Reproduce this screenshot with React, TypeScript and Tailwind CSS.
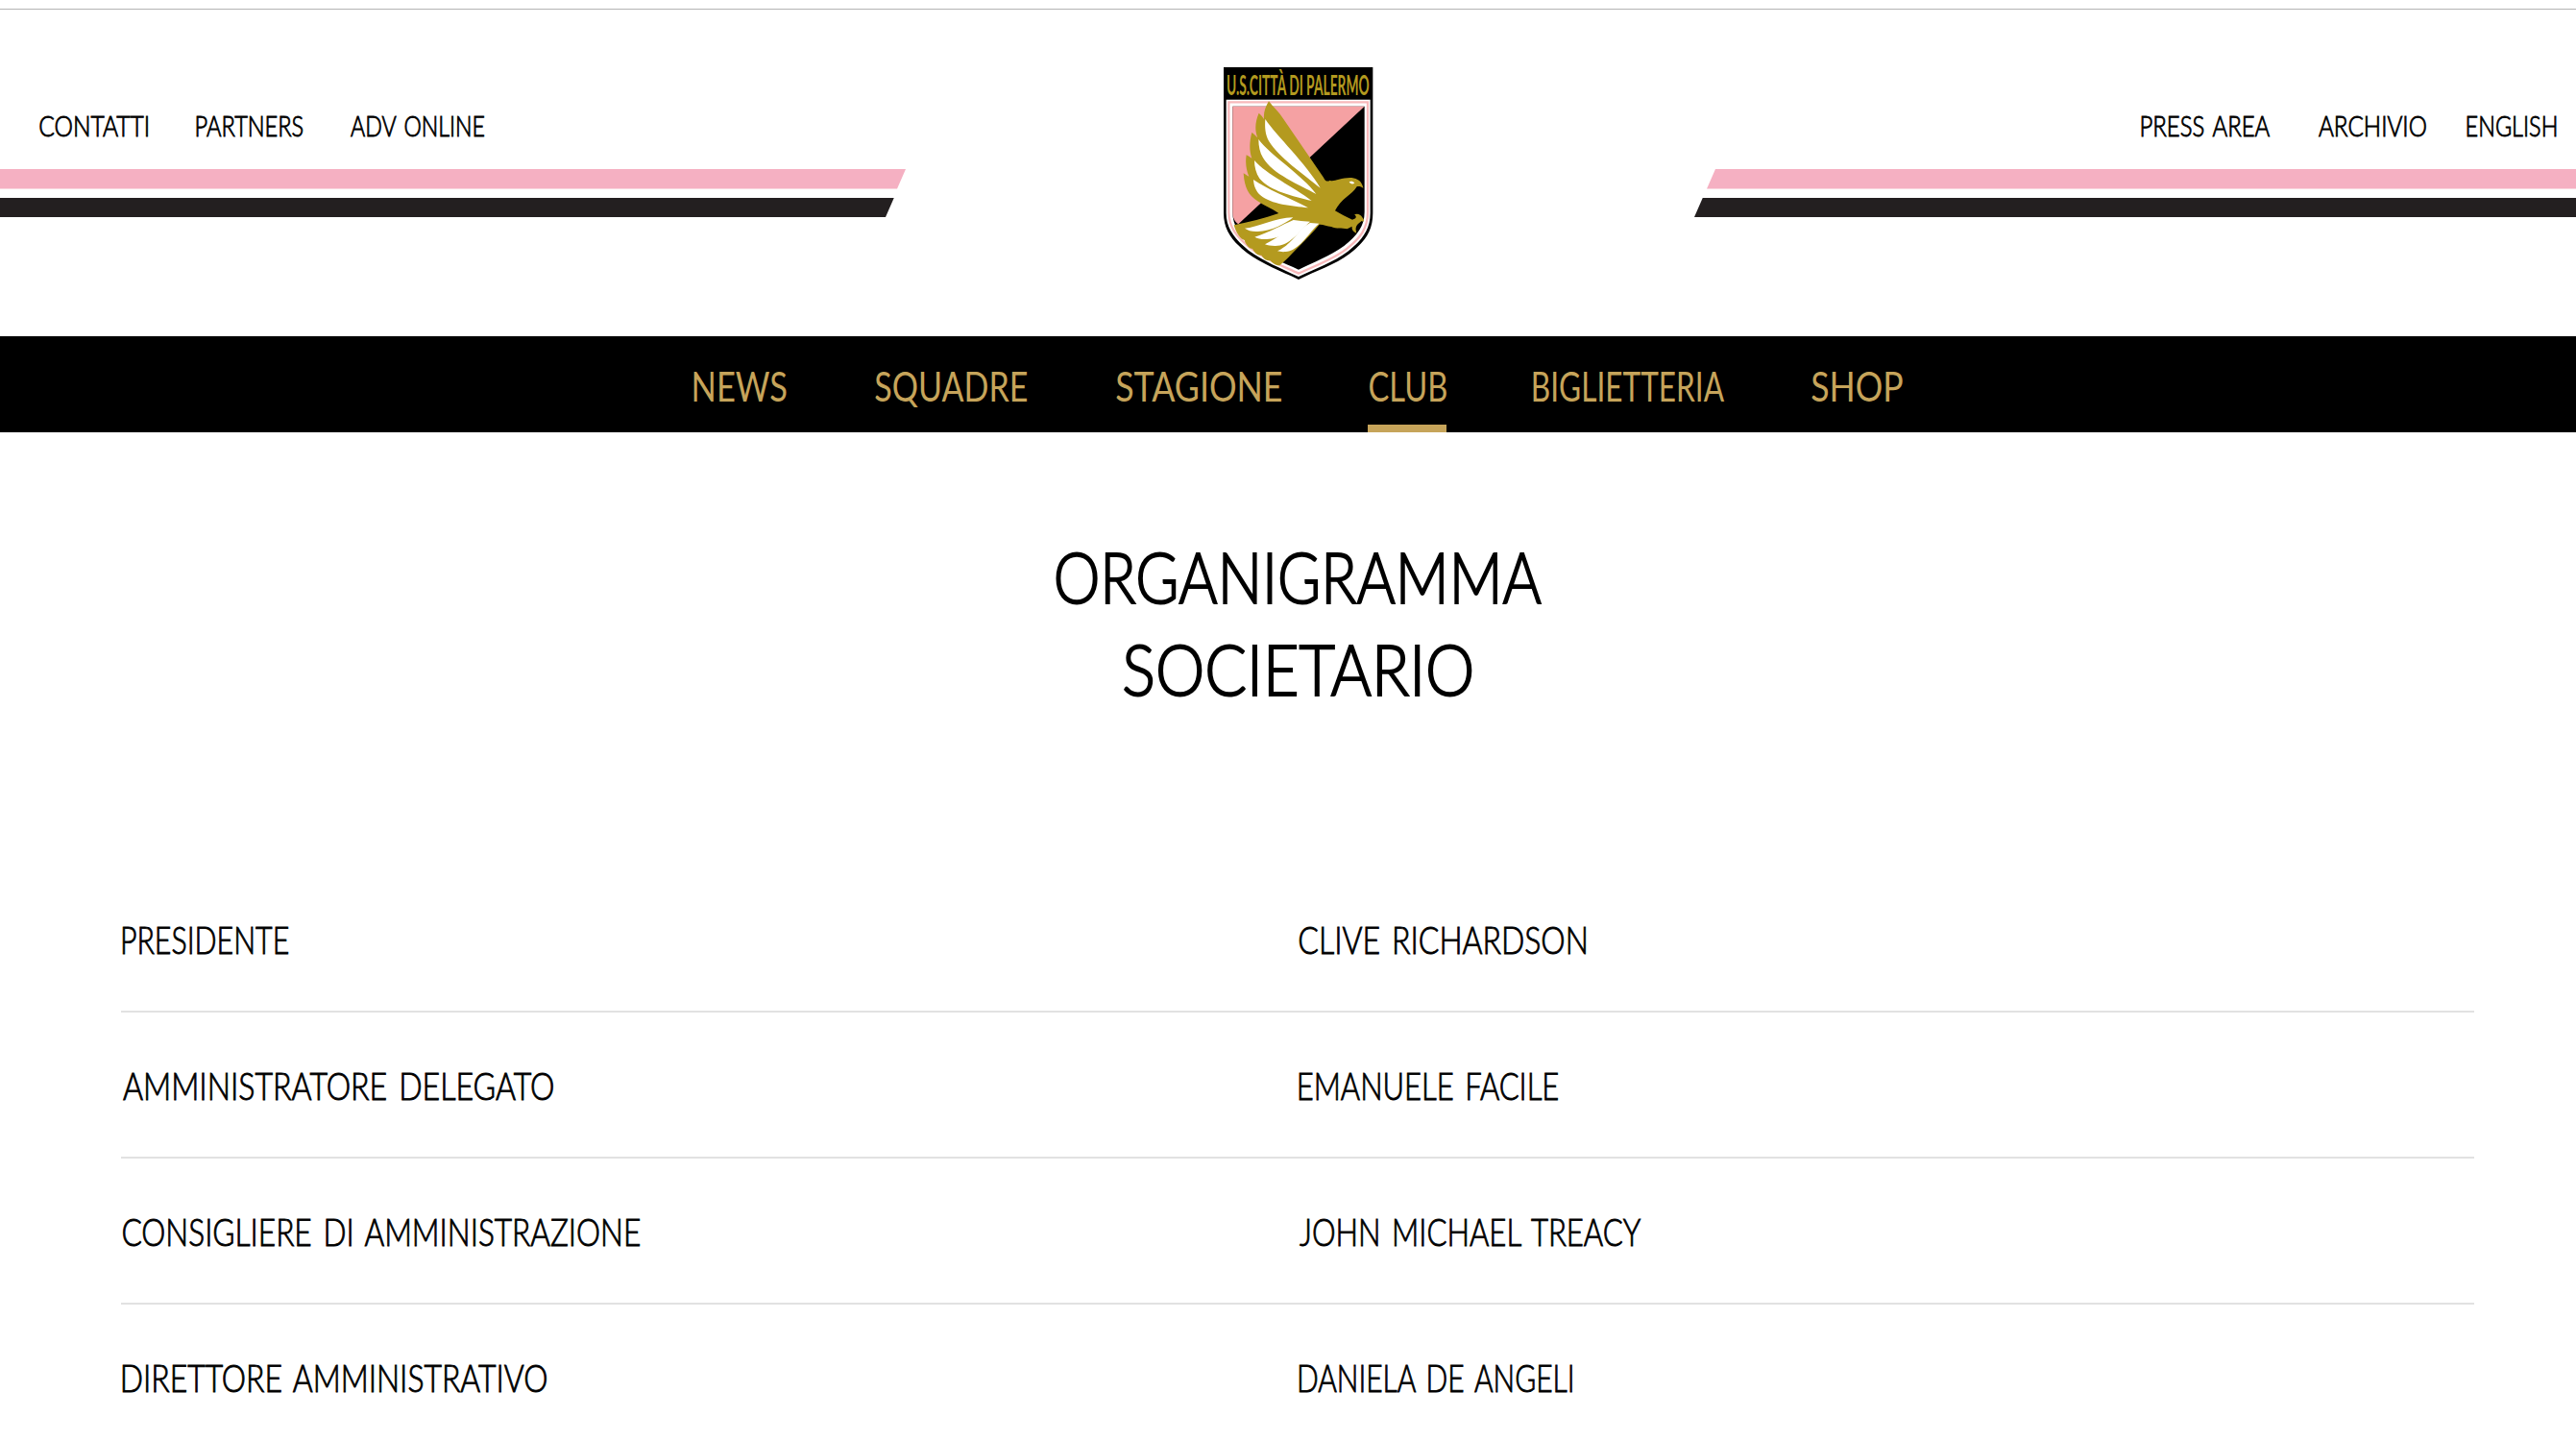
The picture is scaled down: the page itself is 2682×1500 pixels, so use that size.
import { useLayoutEffect, useRef } from "react";

type LabelProps = { text: string; width: number; className?: string };

// Condensed label: narrows the glyphs so the drawn letters span exactly `width` pixels.
function Label({ text, width, className = "" }: LabelProps) {
  const ref = useRef<HTMLSpanElement>(null);
  useLayoutEffect(() => {
    const el = ref.current;
    const ctx = document.createElement("canvas").getContext("2d");
    if (!el || !ctx) return;
    const cs = getComputedStyle(el);
    ctx.font = `${cs.fontWeight} ${cs.fontSize} ${cs.fontFamily}`;
    ctx.wordSpacing = cs.wordSpacing;
    const m = ctx.measureText(text);
    const ink = m.actualBoundingBoxLeft + m.actualBoundingBoxRight;
    el.style.transform = `scaleX(${width / ink}) translateX(${m.actualBoundingBoxLeft}px)`;
  }, [text, width]);
  return (
    <span className={`block ${className}`} style={{ width }}>
      <span ref={ref} className="block w-max origin-left whitespace-nowrap">
        {text}
      </span>
    </span>
  );
}

function Crest() {
  return (
    <svg viewBox="69 57 474 669" className="block h-[223px] w-[158px] overflow-visible">
      <path d="M72 60H538V515C538 575 510 607 465 643C420 677 360 696 306 723C250 696 190 674 145 640C100 603 72 570 72 515Z" fill="#000" />
      <path d="M80 161H530V515C530 568 504 600 460 635C415 669 358 688 306 714C252 688 196 666 150 632C106 596 80 563 80 515Z" fill="#fff" />
      <path d="M88 169H522V513C522 564 498 594 455 628C412 661 356 680 306 704C255 680 200 659 156 625C113 590 88 560 88 513Z" fill="#fff" stroke="#f8b9bb" strokeWidth="7" />
      <path d="M100 182H512V512C512 556 489 585 448 618C405 650 350 670 306 692C261 671 207 650 164 617C122 583 100 556 100 512Z" fill="#000" />
      <path d="M100 182H512L118 550C105 540 100 530 100 512Z" fill="#f5a1a3" />
      <text x="81" y="147" textLength="446" lengthAdjust="spacingAndGlyphs" fill="#b39a1f" fontSize="86" fontWeight="700" fontFamily="Lato, sans-serif">
        U.S.CITTÀ DI PALERMO
      </text>
      <path
        fill="#b49a1f"
        d="M213 166C228 186 245 200 259 222L384 404C389 415 396 419 404 413C412 417 420 412 432 410C446 407 458 404 472 405C490 407 505 417 508 438C501 432 494 431 488 433C481 446 468 456 456 465C440 478 428 492 420 508C437 518 456 529 474 536C486 533 489 526 480 520C491 516 500 520 505 529C513 538 510 545 503 540L493 548C484 556 483 566 487 578C474 573 472 565 473 557L458 565C440 561 424 566 408 558C394 557 382 550 371 551C348 579 324 603 297 630C282 646 266 663 247 679C232 679 224 671 218 664C206 665 196 658 190 647C178 649 168 638 162 627C150 626 140 612 137 600C124 597 110 576 104 553C151 543 198 532 244 516C223 502 197 491 178 478C151 461 137 438 134 391C139 393 143 398 151 401C143 381 139 360 143 334C149 336 153 341 160 344C151 320 153 291 160 264C166 267 171 273 178 280C168 255 171 229 182 203C187 207 192 213 198 222C196 203 202 184 213 166Z"
      />
      <g fill="#fff">
        <path d="M202 222C237 274 330 361 374 437C325 396 244 342 213 290C202 271 200 247 202 222Z" />
        <path d="M181 285C218 335 318 397 361 456C311 428 224 394 195 343C185 326 181 306 181 285Z" />
        <path d="M168 351C207 396 290 433 347 477C290 463 215 446 184 407C173 391 168 371 168 351Z" />
        <path d="M165 411C205 440 275 466 336 499C285 493 221 489 187 460C173 448 166 430 165 411Z" />
        <path d="M138 563C177 561 233 529 289 529C267 548 215 575 174 573C158 573 147 569 138 563Z" />
        <path d="M169 590C215 576 256 551 290 537L314 540C286 568 245 599 202 597C188 597 177 595 169 590Z" />
        <path d="M201 613C252 588 283 554 313 540L342 542C305 575 278 619 232 618C219 618 209 616 201 613Z" />
        <path d="M240 634C293 608 303 566 342 546L370 548C338 575 309 633 266 636C256 637 247 636 240 634Z" />
        <path d="M464 418C469 415 476 416 481 421C476 427 468 425 464 418Z" />
      </g>
    </svg>
  );
}

function Stripes({ side }: { side: "left" | "right" }) {
  const left = side === "left";
  return (
    <div className={`flex flex-col gap-[9px] ${left ? "items-start" : "items-end"}`}>
      <div
        className={
          left
            ? "h-[20.5px] w-[943px] bg-[#f5b0c2] [clip-path:polygon(0_0,100%_0,calc(100%-9px)_100%,0_100%)]"
            : "h-[20.5px] w-[905px] bg-[#f5b0c2] [clip-path:polygon(9px_0,100%_0,100%_100%,0_100%)]"
        }
      />
      <div
        className={
          left
            ? "h-[20.5px] w-[931px] bg-[#231f20] [clip-path:polygon(0_0,100%_0,calc(100%-9px)_100%,0_100%)]"
            : "h-[20.5px] w-[918px] bg-[#231f20] [clip-path:polygon(9px_0,100%_0,100%_100%,0_100%)]"
        }
      />
    </div>
  );
}

const staff = [
  { role: "PRESIDENTE", roleWidth: 172, name: "CLIVE RICHARDSON", nameWidth: 298 },
  { role: "AMMINISTRATORE DELEGATO", roleWidth: 448, name: "EMANUELE FACILE", nameWidth: 269 },
  { role: "CONSIGLIERE DI AMMINISTRAZIONE", roleWidth: 539, name: "JOHN MICHAEL TREACY", nameWidth: 357 },
  { role: "DIRETTORE AMMINISTRATIVO", roleWidth: 442, name: "DANIELA DE ANGELI", nameWidth: 286 },
];

export default function App() {
  return (
    <div className="h-[1500px] w-[2682px] overflow-hidden bg-white font-[Lato,sans-serif] text-black">
      <header className="h-[350px] pt-[9px]">
        <div className="h-px bg-[#b4b4b4]" />
        <div className="flex justify-between">
          <div className="flex w-[943px] flex-col pt-[101px]">
            <nav className="mb-[25px] flex h-10 pl-[41px] text-[29px] leading-10 font-light [word-spacing:3px] [-webkit-text-stroke:0.9px_#000]">
              <Label text="CONTATTI" width={113} />
              <Label text="PARTNERS" width={110} className="ml-[51px]" />
              <Label text="ADV ONLINE" width={140} className="ml-[50px]" />
            </nav>
            <Stripes side="left" />
          </div>
          <div className="mr-[3px] pt-[59px]">
            <Crest />
          </div>
          <div className="flex w-[918px] flex-col pt-[101px]">
            <nav className="mb-[25px] flex h-10 justify-end pr-[21px] text-[29px] leading-10 font-light [word-spacing:3px] [-webkit-text-stroke:0.9px_#000]">
              <Label text="PRESS AREA" width={134} />
              <Label text="ARCHIVIO" width={112} className="ml-[50px]" />
              <Label text="ENGLISH" width={92} className="ml-[43px]" />
            </nav>
            <Stripes side="right" />
          </div>
        </div>
      </header>

      <nav className="flex h-[100px] bg-black pl-[722px] text-[43px] leading-[103px] text-[#c6a45a]">
        <Label text="NEWS" width={97} />
        <Label text="SQUADRE" width={158} className="ml-[92px]" />
        <Label text="STAGIONE" width={172} className="ml-[93px]" />
        <div className="ml-[90px] flex h-[100px] flex-col justify-between">
          <Label text="CLUB" width={80} className="ml-[2px] h-[92px]" />
          <div className="h-2 w-[82px] bg-[#c6a45a]" />
        </div>
        <Label text="BIGLIETTERIA" width={199} className="ml-[90px]" />
        <Label text="SHOP" width={95} className="ml-[91px]" />
      </nav>

      <main>
        <h1 className="ml-[21px] flex flex-col items-center pt-[102px] text-[73px] leading-[96px] font-light [-webkit-text-stroke:2px_#000]">
          <Label text="ORGANIGRAMMA" width={504} />
          <Label text="SOCIETARIO" width={361} />
        </h1>
        <div className="mt-[158px] ml-[126px] w-[2450px] text-[39px] leading-[152px] font-light [word-spacing:4px] [-webkit-text-stroke:0.9px_#000]">
          {staff.map((p) => (
            <div key={p.role} className="grid h-[152px] grid-cols-2 border-b-2 border-[#e2e2e2] pl-[2px]">
              <Label text={p.role} width={p.roleWidth} />
              <Label text={p.name} width={p.nameWidth} className="ml-px" />
            </div>
          ))}
        </div>
      </main>
    </div>
  );
}
